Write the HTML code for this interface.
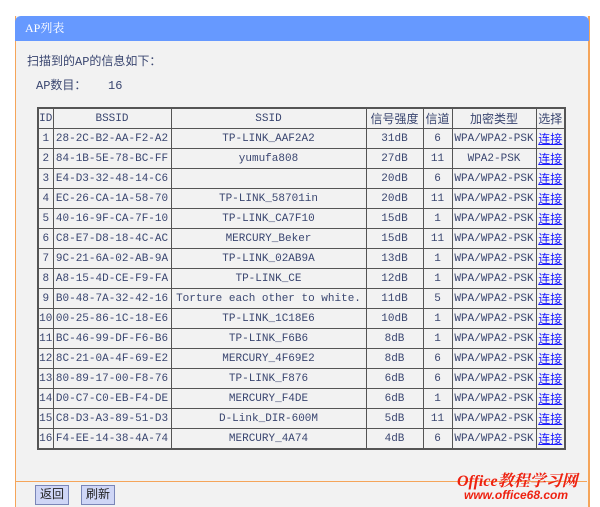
<!DOCTYPE html><html><head><style>
body{margin:0;width:600px;height:507px;background:#fff;overflow:hidden;font-family:"Liberation Mono","Noto Sans CJK SC",monospace;color:#3a4670}
.box{position:absolute;left:15px;top:16px;width:572px;height:491px;background:#f2f2f2;border-left:1px solid #f5a55a;border-right:2px solid #f5a55a}
.hd{position:absolute;left:15px;top:16px;width:574px;height:25px;background:#6699ff;border-radius:6px 6px 0 0;color:#fff;font-size:12px;line-height:25px;padding-left:10px;box-sizing:border-box;font-family:"Liberation Serif","Noto Serif CJK SC",serif}
.t1{position:absolute;left:27px;top:52px;font-size:12px}
.t2{position:absolute;left:36px;top:76px;font-size:12px}
table{position:absolute;left:37px;top:107px;width:529px;border-collapse:collapse;font-size:11px;border:2px solid #555}
td{border:1px solid #555;height:19px;padding:0;text-align:center;white-space:nowrap}
a{color:#1a1aff;text-decoration:underline;font-size:12px}
.ln{position:absolute;left:15px;top:481px;width:572px;height:1px;background:#f5a55a}
.btn{position:absolute;top:485px;height:18px;border:1px solid #7a86b8;background:#cfd6f6;font-size:12px;line-height:18px;padding:0 4px;color:#222}
.wm{position:absolute;left:457px;top:468px;color:#e21;font:italic bold 16px "Liberation Serif","Noto Serif CJK SC",serif}
.wm2{position:absolute;left:464px;top:488px;color:#e21;font:italic bold 12px "Liberation Sans",sans-serif}
</style></head><body>
<div class="box"></div><div class="hd">AP列表</div>
<div class="t1">扫描到的AP的信息如下：</div>
<div class="t2">AP数目：&nbsp;&nbsp;&nbsp;16</div>
<table>
<colgroup><col style="width:15px"><col style="width:118px"><col style="width:195px"><col style="width:57px"><col style="width:29px"><col style="width:84px"><col style="width:29px"></colgroup>
<tr><td>ID</td><td>BSSID</td><td>SSID</td><td style="font-size:12px">信号强度</td><td style="font-size:12px">信道</td><td style="font-size:12px">加密类型</td><td style="font-size:12px">选择</td></tr>
<tr><td>1</td><td>28-2C-B2-AA-F2-A2</td><td>TP-LINK_AAF2A2</td><td>31dB</td><td>6</td><td>WPA/WPA2-PSK</td><td><a>连接</a></td></tr>
<tr><td>2</td><td>84-1B-5E-78-BC-FF</td><td>yumufa808</td><td>27dB</td><td>11</td><td>WPA2-PSK</td><td><a>连接</a></td></tr>
<tr><td>3</td><td>E4-D3-32-48-14-C6</td><td></td><td>20dB</td><td>6</td><td>WPA/WPA2-PSK</td><td><a>连接</a></td></tr>
<tr><td>4</td><td>EC-26-CA-1A-58-70</td><td>TP-LINK_58701in</td><td>20dB</td><td>11</td><td>WPA/WPA2-PSK</td><td><a>连接</a></td></tr>
<tr><td>5</td><td>40-16-9F-CA-7F-10</td><td>TP-LINK_CA7F10</td><td>15dB</td><td>1</td><td>WPA/WPA2-PSK</td><td><a>连接</a></td></tr>
<tr><td>6</td><td>C8-E7-D8-18-4C-AC</td><td>MERCURY_Beker</td><td>15dB</td><td>11</td><td>WPA/WPA2-PSK</td><td><a>连接</a></td></tr>
<tr><td>7</td><td>9C-21-6A-02-AB-9A</td><td>TP-LINK_02AB9A</td><td>13dB</td><td>1</td><td>WPA/WPA2-PSK</td><td><a>连接</a></td></tr>
<tr><td>8</td><td>A8-15-4D-CE-F9-FA</td><td>TP-LINK_CE</td><td>12dB</td><td>1</td><td>WPA/WPA2-PSK</td><td><a>连接</a></td></tr>
<tr><td>9</td><td>B0-48-7A-32-42-16</td><td>Torture each other to white.</td><td>11dB</td><td>5</td><td>WPA/WPA2-PSK</td><td><a>连接</a></td></tr>
<tr><td>10</td><td>00-25-86-1C-18-E6</td><td>TP-LINK_1C18E6</td><td>10dB</td><td>1</td><td>WPA/WPA2-PSK</td><td><a>连接</a></td></tr>
<tr><td>11</td><td>BC-46-99-DF-F6-B6</td><td>TP-LINK_F6B6</td><td>8dB</td><td>1</td><td>WPA/WPA2-PSK</td><td><a>连接</a></td></tr>
<tr><td>12</td><td>8C-21-0A-4F-69-E2</td><td>MERCURY_4F69E2</td><td>8dB</td><td>6</td><td>WPA/WPA2-PSK</td><td><a>连接</a></td></tr>
<tr><td>13</td><td>80-89-17-00-F8-76</td><td>TP-LINK_F876</td><td>6dB</td><td>6</td><td>WPA/WPA2-PSK</td><td><a>连接</a></td></tr>
<tr><td>14</td><td>D0-C7-C0-EB-F4-DE</td><td>MERCURY_F4DE</td><td>6dB</td><td>1</td><td>WPA/WPA2-PSK</td><td><a>连接</a></td></tr>
<tr><td>15</td><td>C8-D3-A3-89-51-D3</td><td>D-Link_DIR-600M</td><td>5dB</td><td>11</td><td>WPA/WPA2-PSK</td><td><a>连接</a></td></tr>
<tr><td>16</td><td>F4-EE-14-38-4A-74</td><td>MERCURY_4A74</td><td>4dB</td><td>6</td><td>WPA/WPA2-PSK</td><td><a>连接</a></td></tr>
</table>
<div class="ln"></div>
<div class="btn" style="left:35px">返回</div><div class="btn" style="left:81px">刷新</div>
<div class="wm">Office教程学习网</div><div class="wm2">www.office68.com</div>
</body></html>
